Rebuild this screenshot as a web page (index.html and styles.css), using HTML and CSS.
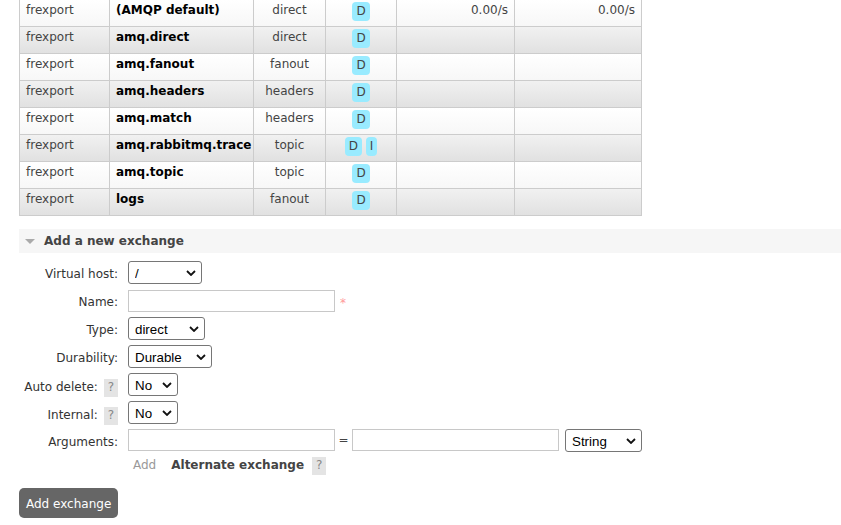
FILE: index.html
```html
<!DOCTYPE html>
<html lang="en">
<head>
<meta charset="utf-8">
<title>Exchanges</title>
<link rel="stylesheet" href="styles.css">
</head>
<body>
<main class="page">
  <table class="list">
    <colgroup>
      <col class="c-vhost"><col class="c-name"><col class="c-type"><col class="c-feat"><col class="c-in"><col class="c-out">
    </colgroup>
    <tbody>
      <tr class="alt2"><td>frexport</td><td class="name">(AMQP default)</td><td class="center">direct</td><td class="center feat-cell"><abbr class="feat">D</abbr></td><td class="right">0.00/s</td><td class="right">0.00/s</td></tr>
      <tr class="alt1"><td>frexport</td><td class="name">amq.direct</td><td class="center">direct</td><td class="center feat-cell"><abbr class="feat">D</abbr></td><td></td><td></td></tr>
      <tr class="alt2"><td>frexport</td><td class="name">amq.fanout</td><td class="center">fanout</td><td class="center feat-cell"><abbr class="feat">D</abbr></td><td></td><td></td></tr>
      <tr class="alt1"><td>frexport</td><td class="name">amq.headers</td><td class="center">headers</td><td class="center feat-cell"><abbr class="feat">D</abbr></td><td></td><td></td></tr>
      <tr class="alt2"><td>frexport</td><td class="name">amq.match</td><td class="center">headers</td><td class="center feat-cell"><abbr class="feat">D</abbr></td><td></td><td></td></tr>
      <tr class="alt1"><td>frexport</td><td class="name">amq.rabbitmq.trace</td><td class="center">topic</td><td class="center feat-cell"><abbr class="feat">D</abbr> <abbr class="feat">I</abbr></td><td></td><td></td></tr>
      <tr class="alt2"><td>frexport</td><td class="name">amq.topic</td><td class="center">topic</td><td class="center feat-cell"><abbr class="feat">D</abbr></td><td></td><td></td></tr>
      <tr class="alt1"><td>frexport</td><td class="name">logs</td><td class="center">fanout</td><td class="center feat-cell"><abbr class="feat">D</abbr></td><td></td><td></td></tr>
    </tbody>
  </table>

  <section class="section">
    <h2 class="section-title"><span class="tri"></span>Add a new exchange</h2>
    <form class="form">
      <label class="lbl">Virtual host:</label>
      <div class="ctl"><select class="sel w-vhost"><option>/</option></select></div>

      <label class="lbl">Name:</label>
      <div class="ctl"><input class="txt txt-name" type="text"><span class="mand">*</span></div>

      <label class="lbl">Type:</label>
      <div class="ctl"><select class="sel w-type"><option>direct</option></select></div>

      <label class="lbl">Durability:</label>
      <div class="ctl"><select class="sel w-dur"><option>Durable</option></select></div>

      <label class="lbl">Auto delete: <span class="help">?</span></label>
      <div class="ctl"><select class="sel w-no"><option>No</option></select></div>

      <label class="lbl">Internal: <span class="help">?</span></label>
      <div class="ctl"><select class="sel w-no"><option>No</option></select></div>

      <label class="lbl">Arguments:</label>
      <div class="ctl">
        <div class="argrow">
          <input class="txt" type="text"><span class="eq">=</span><input class="txt" type="text"><select class="sel w-str"><option>String</option></select>
        </div>
        <div class="argfoot">
          <span class="add">Add</span><span class="alt">Alternate exchange</span><span class="help help-alt">?</span>
        </div>
      </div>
    </form>
    <button class="btn" type="button">Add exchange</button>
  </section>
</main>
</body>
</html>
```
FILE: styles.css
```css
html, body {
  margin: 0;
  padding: 0;
  background: #fff;
}
body {
  font-family: "DejaVu Sans", Verdana, sans-serif;
  font-size: 12px;
  line-height: 15px;
  color: #444;
}
.page {
  padding-left: 19px;
}

/* table */
.list {
  border-collapse: separate;
  border-spacing: 0;
  table-layout: fixed;
  width: 623px;
  border-left: 1px solid #ccc;
}
.c-vhost { width: 90px; }
.c-name { width: 144px; }
.c-type { width: 72px; }
.c-feat { width: 71px; }
.c-in { width: 118px; }
.c-out { width: 127px; }
.list td {
  box-sizing: border-box;
  height: 27px;
  padding: 3px 6px 0;
  border-right: 1px solid #ccc;
  border-bottom: 1px solid #ccc;
  vertical-align: top;
  white-space: nowrap;
  overflow: hidden;
}
.alt2 td { background: linear-gradient(#ffffff, #f7f7f7); }
.alt1 td { background: linear-gradient(#f1f1f1, #e1e1e1); }
.list td.name { font-weight: bold; color: #000; }
.list td.center { text-align: center; }
.list td.right { text-align: right; }
.list td.feat-cell { padding-top: 2px; }
.feat {
  display: inline-block;
  vertical-align: top;
  background: #99ebff;
  color: #444;
  border-radius: 4px;
  padding: 2px 4px;
  line-height: 15px;
  text-decoration: none;
}

/* section */
.section { margin-top: 13px; }
.section-title {
  margin: 0;
  background: #f6f6f6;
  font-size: 12px;
  font-weight: bold;
  line-height: 15px;
  color: #444;
  padding: 5px 0 4px 6px;
}
.tri {
  display: inline-block;
  width: 0;
  height: 0;
  border-left: 5px solid transparent;
  border-right: 5px solid transparent;
  border-top: 5px solid #aaa;
  margin-right: 9px;
  vertical-align: 1px;
}

/* form */
.form {
  display: grid;
  grid-template-columns: 99px auto;
  grid-auto-rows: minmax(23px, auto);
  column-gap: 10px;
  row-gap: 5px;
  align-items: start;
  margin: 8px 0 0;
}
.lbl {
  box-sizing: border-box;
  height: 23px;
  text-align: right;
  white-space: nowrap;
  color: #333;
  padding-top: 6px;
}
.ctl {
  display: flex;
  align-items: flex-start;
  flex-wrap: wrap;
}
.sel {
  appearance: none;
  -webkit-appearance: none;
  box-sizing: border-box;
  height: 23px;
  margin: 0;
  padding: 1px 0 0 6px;
  border: 1px solid #767676;
  border-radius: 3px;
  background: #fff url("data:image/svg+xml,%3Csvg xmlns='http://www.w3.org/2000/svg' width='10' height='6' viewBox='0 0 10 6'%3E%3Cpath d='M1 1l4 4 4-4' fill='none' stroke='%23111' stroke-width='1.8'/%3E%3C/svg%3E") no-repeat right 5px center / 10px 6px;
  font-family: "Liberation Sans", Arial, sans-serif;
  font-size: 13.33px;
  color: #000;
}
.w-vhost { width: 74px; }
.w-type { width: 77px; }
.w-dur { width: 84px; }
.w-no { width: 50px; }
.w-str { width: 77px; margin-left: 6px; }
.txt {
  box-sizing: border-box;
  width: 207px;
  height: 22px;
  margin: 0;
  padding: 0 3px;
  border: 1px solid #c8c8c8;
  background: #fff;
  font-family: "Liberation Sans", Arial, sans-serif;
  font-size: 13.33px;
}
.txt-name { margin-top: 1px; }
.mand {
  color: #f99;
  padding-left: 5px;
  padding-top: 7px;
  line-height: 15px;
}
.help {
  display: inline-block;
  background: #e4e4e4;
  color: #888;
  padding: 1px 4px 2px;
  line-height: 15px;
  margin-left: 2px;
  font-weight: normal;
}

.ctl .argrow {
  display: flex;
  align-items: flex-start;
  width: 100%;
}
.eq {
  line-height: 22px;
  width: 17px;
  text-align: center;
}
.argfoot {
  display: flex;
  align-items: baseline;
  margin-top: 5px;
  width: 100%;
}
.add {
  color: #999;
  padding-left: 5px;
}
.alt {
  font-weight: bold;
  color: #444;
  margin-left: 15px;
}
.help-alt { margin-left: 8px; }

.btn {
  display: block;
  margin-top: 13px;
  height: 30px;
  padding: 2px 7px 0;
  background: #666;
  color: #fff;
  border: 0;
  border-radius: 5px;
  font-family: "DejaVu Sans", Verdana, sans-serif;
  font-size: 12px;
}
```
